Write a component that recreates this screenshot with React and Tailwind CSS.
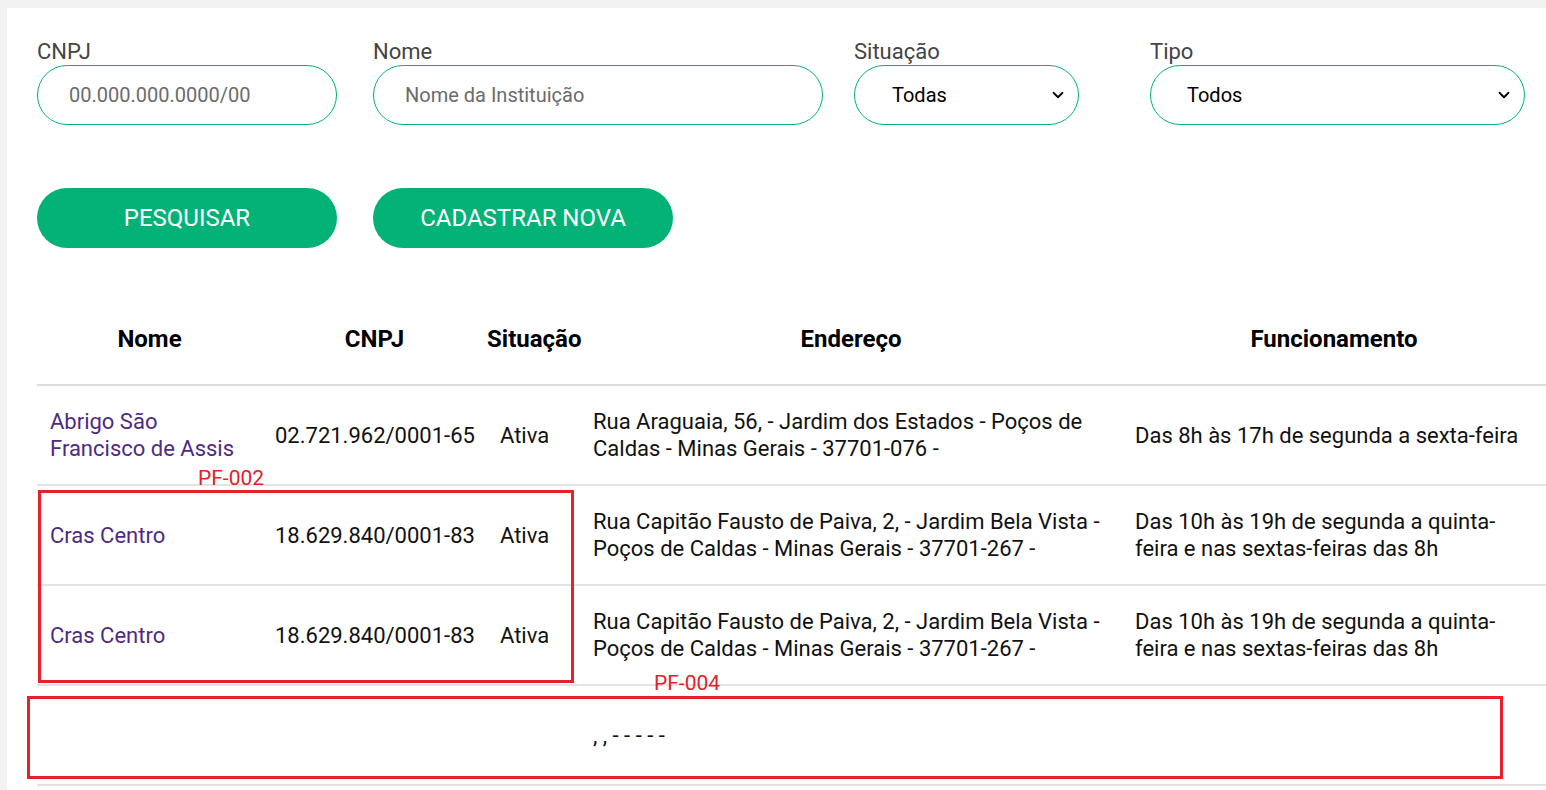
import React from 'react';
import { ChevronDown } from 'lucide-react';

const rows = [
  {
    nome: 'Abrigo São Francisco de Assis',
    cnpj: '02.721.962/0001-65',
    situacao: 'Ativa',
    endereco: 'Rua Araguaia, 56, - Jardim dos Estados - Poços de Caldas - Minas Gerais - 37701-076 -',
    funcionamento: 'Das 8h às 17h de segunda a sexta-feira',
  },
  {
    nome: 'Cras Centro',
    cnpj: '18.629.840/0001-83',
    situacao: 'Ativa',
    endereco: 'Rua Capitão Fausto de Paiva, 2, - Jardim Bela Vista - Poços de Caldas - Minas Gerais - 37701-267 -',
    funcionamento: 'Das 10h às 19h de segunda a quinta-feira e nas sextas-feiras das 8h',
  },
  {
    nome: 'Cras Centro',
    cnpj: '18.629.840/0001-83',
    situacao: 'Ativa',
    endereco: 'Rua Capitão Fausto de Paiva, 2, - Jardim Bela Vista - Poços de Caldas - Minas Gerais - 37701-267 -',
    funcionamento: 'Das 10h às 19h de segunda a quinta-feira e nas sextas-feiras das 8h',
  },
  {
    nome: '',
    cnpj: '',
    situacao: '',
    endereco: ', , - - - - -',
    funcionamento: '',
  },
];

const Field = ({ label, width, children }) => (
  <div className="flex flex-col" style={{ width }}>
    <label className="text-[22px] leading-[24px] text-[#444]">{label}</label>
    <div className="mt-[1px] h-[60px] rounded-full border border-[#02b277] flex items-center">
      {children}
    </div>
  </div>
);

const App = () => {
  return (
    <div className="relative min-h-screen w-full bg-[#f2f2f2] pt-[8px] pl-[7px] overflow-hidden font-['Roboto',sans-serif]">
      <div className="bg-white min-h-[782px] pl-[30px] pt-[32px]">
        {/* Filtros */}
        <div className="flex items-start">
          <Field label="CNPJ" width="300px">
            <input
              className="w-full bg-transparent outline-none pl-[31px] text-[20px] placeholder-[#6b6b6b]"
              placeholder="00.000.000.0000/00"
            />
          </Field>
          <div className="ml-[36px]">
            <Field label="Nome" width="450px">
              <input
                className="w-full bg-transparent outline-none pl-[31px] text-[20px] placeholder-[#6b6b6b]"
                placeholder="Nome da Instituição"
              />
            </Field>
          </div>
          <div className="ml-[31px]">
            <Field label="Situação" width="225px">
              <div className="flex w-full items-center justify-between pl-[37px] pr-[11px] text-[20px] text-black">
                <span>Todas</span>
                <ChevronDown size={18} strokeWidth={2.4} />
              </div>
            </Field>
          </div>
          <div className="ml-[71px]">
            <Field label="Tipo" width="375px">
              <div className="flex w-full items-center justify-between pl-[36px] pr-[11px] text-[20px] text-black">
                <span>Todos</span>
                <ChevronDown size={18} strokeWidth={2.4} />
              </div>
            </Field>
          </div>
        </div>

        {/* Botões */}
        <div className="flex gap-[36px] mt-[63px]">
          <button className="w-[300px] h-[60px] rounded-full bg-[#02b277] text-white text-[24px]">
            PESQUISAR
          </button>
          <button className="w-[300px] h-[60px] rounded-full bg-[#02b277] text-white text-[24px]">
            CADASTRAR NOVA
          </button>
        </div>

        {/* Tabela */}
        <table className="mt-[47px] w-[1509px] table-fixed border-collapse text-[22px] leading-[27px] text-[#111]">
          <colgroup>
            <col className="w-[225px]" />
            <col className="w-[225px]" />
            <col className="w-[93px]" />
            <col className="w-[542px]" />
            <col className="w-[424px]" />
          </colgroup>
          <thead>
            <tr className="h-[90px] border-b-2 border-[#dcdcdc]">
              <th className="font-bold text-[24px] text-black">Nome</th>
              <th className="font-bold text-[24px] text-black">CNPJ</th>
              <th className="font-bold text-[24px] text-black">Situação</th>
              <th className="font-bold text-[24px] text-black">Endereço</th>
              <th className="font-bold text-[24px] text-black">Funcionamento</th>
            </tr>
          </thead>
          <tbody>
            {rows.map((r, i) => (
              <tr key={i} className="h-[100px] border-b-2 border-[#e3e3e3]">
                <td className="px-[13px] align-middle text-[#4e2a84]">{r.nome}</td>
                <td className="pl-[13px] pr-0 align-middle whitespace-nowrap">{r.cnpj}</td>
                <td className="px-[13px] align-middle">{r.situacao}</td>
                <td className="px-[13px] align-middle">{r.endereco}</td>
                <td className="px-[13px] align-middle">{r.funcionamento}</td>
              </tr>
            ))}
          </tbody>
        </table>
      </div>

      {/* Anotações */}
      <span className="absolute left-[198px] top-[465px] text-[21px] leading-[26px] text-[#e8202a]">PF-002</span>
      <div className="absolute left-[38px] top-[490px] w-[536px] h-[193px] border-[3px] border-[#e8202a]" />
      <span className="absolute left-[654px] top-[670px] text-[21px] leading-[26px] text-[#e8202a]">PF-004</span>
      <div className="absolute left-[27px] top-[696px] w-[1476px] h-[83px] border-[3px] border-[#e8202a]" />
    </div>
  );
};

export default App;
